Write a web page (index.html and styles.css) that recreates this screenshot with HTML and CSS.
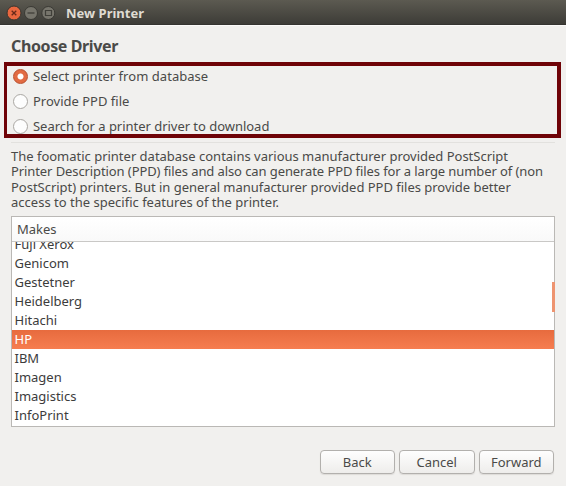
FILE: index.html
```html
<!DOCTYPE html>
<html lang="en">
<head>
<meta charset="utf-8">
<title>New Printer</title>
<link rel="stylesheet" href="styles.css">
</head>
<body>
<div class="window">
  <header class="titlebar">
    <svg class="controls" width="56" height="16" viewBox="0 0 56 16" aria-hidden="true">
      <circle cx="8" cy="8" r="7" fill="#e9673f" stroke="#37352f"/>
      <path d="M5.700 5.700l4.600 4.600M10.300 5.700l-4.600 4.600" stroke="#68291a" stroke-width="1.300"/>
      <circle cx="25" cy="8" r="6.500" fill="#77756c" stroke="#3a3934"/>
      <path d="M21.500 8h7" stroke="#403f39" stroke-width="1.300"/>
      <circle cx="42.300" cy="8" r="6.500" fill="#77756c" stroke="#3a3934"/>
      <path d="M39.500 5.500h6v5h-6z" fill="none" stroke="#403f39" stroke-width="1.200"/>
    </svg>
    <span class="title">New Printer</span>
  </header>
  <main class="content">
    <h1 class="heading">Choose Driver</h1>
    <div class="options">
      <label class="option"><span class="radio checked"></span><span class="t-select">Select printer from database</span></label>
      <label class="option"><span class="radio"></span><span class="t-ppd">Provide PPD file</span></label>
      <label class="option"><span class="radio"></span><span class="t-search">Search for a printer driver to download</span></label>
    </div>
    <hr class="separator">
    <p class="description">
      <span class="line l1">The foomatic printer database contains various manufacturer provided PostScript</span>
      <span class="line l2">Printer Description (PPD) files and also can generate PPD files for a large number of (non</span>
      <span class="line l3">PostScript) printers. But in general manufacturer provided PPD files provide better</span>
      <span class="line l4">access to the specific features of the printer.</span>
    </p>
    <section class="makes">
      <div class="makes-head">Makes</div>
      <div class="makes-body">
        <ul class="rows">
          <li>Fuji Xerox</li>
          <li>Genicom</li>
          <li>Gestetner</li>
          <li>Heidelberg</li>
          <li>Hitachi</li>
          <li class="selected">HP</li>
          <li>IBM</li>
          <li>Imagen</li>
          <li>Imagistics</li>
          <li>InfoPrint</li>
        </ul>
      </div>
      <div class="scroll-thumb"></div>
    </section>
    <footer class="actions">
      <button class="btn">Back</button>
      <button class="btn">Cancel</button>
      <button class="btn">Forward</button>
    </footer>
  </main>
</div>
</body>
</html>
```
FILE: styles.css
```css
* { box-sizing: border-box; }
body {
  margin: 0;
  background: #f1f0ee;
  color: #4a4a48;
  font: 13px/19px "Noto Sans", "Open Sans", sans-serif;
}
.window { width: 566px; height: 486px; overflow: hidden; }
.titlebar {
  display: flex;
  align-items: center;
  height: 25px;
  padding-left: 6px;
  background: linear-gradient(#5c5a51, #3d3c37);
  border-bottom: 1px solid #353430;
}
.controls { margin-top: 2px; }
.title {
  margin: 3px 0 0 4px;
  color: #dfdbd2;
  font-weight: 700;
  font-size: 13px;
}
.content { padding: 0 11px; border-top: 1px solid #fbfaf9; }
.heading {
  margin: 0;
  height: 36px;
  padding-top: 9px;
  font-size: 16px;
  line-height: 22px;
  font-weight: 700;
  letter-spacing: -0.38px;
}
.options {
  display: flex;
  flex-direction: column;
  gap: 6px;
  height: 76px;
  margin: 0 -6px 0 -7px;
  padding: 0 6px;
  border: 4px solid #6f0307;
  border-left-width: 3px;
}
.option { display: flex; align-items: center; gap: 5px; height: 19px; padding-top: 1px; white-space: nowrap; }
.t-select { letter-spacing: 0.04px; }
.t-search { letter-spacing: -0.03px; }
.radio {
  width: 15px;
  height: 15px;
  border: 1px solid #aaa7a3;
  border-radius: 50%;
  background: #fdfdfd;
}
.radio.checked {
  border-color: #b9502f;
  background: radial-gradient(circle, #fff 0 2.6px, #e26b43 3.4px);
}
.separator { height: 1px; margin: 4px 0 6px; border: 0; background: #e2e1de; }
.description { margin: 0; height: 67px; line-height: 15.4px; }
.line { display: block; white-space: nowrap; width: max-content; }
.l1 { letter-spacing: -0.01px; }
.l2 { letter-spacing: -0.095px; }
.l3 { letter-spacing: -0.02px; }
.l4 { letter-spacing: 0.01px; }
.makes {
  position: relative;
  width: 544px;
  height: 211px;
  border: 1px solid #bab8b5;
  background: #fff;
}
.makes-head {
  height: 25px;
  padding: 3px 5px;
  border-bottom: 1px solid #c9c8c6;
  background: linear-gradient(#fff, #f9f9f9);
}
.makes-body { height: 184px; overflow: hidden; }
.rows { margin: -7px 0 0; padding: 0; list-style: none; color: #3c3c3c; }
.rows li { height: 19px; padding-left: 2.5px; }
.rows .selected { background: linear-gradient(#e76b3e, #f67d50); color: #fff; }
.scroll-thumb { position: absolute; top: 65px; right: -1px; width: 3px; height: 30px; background: #ee9470; }
.actions { display: flex; justify-content: flex-end; gap: 4px; margin: 23px 1px 0 0; }
.btn {
  width: 75.500px;
  height: 24px;
  padding: 0;
  border: 1px solid #b2b0ad;
  border-radius: 4px;
  background: linear-gradient(#fefefe, #eeedeb);
  box-shadow: 0 1px 1px #dddbd8;
  color: #4a4a48;
  font: inherit;
}
```
